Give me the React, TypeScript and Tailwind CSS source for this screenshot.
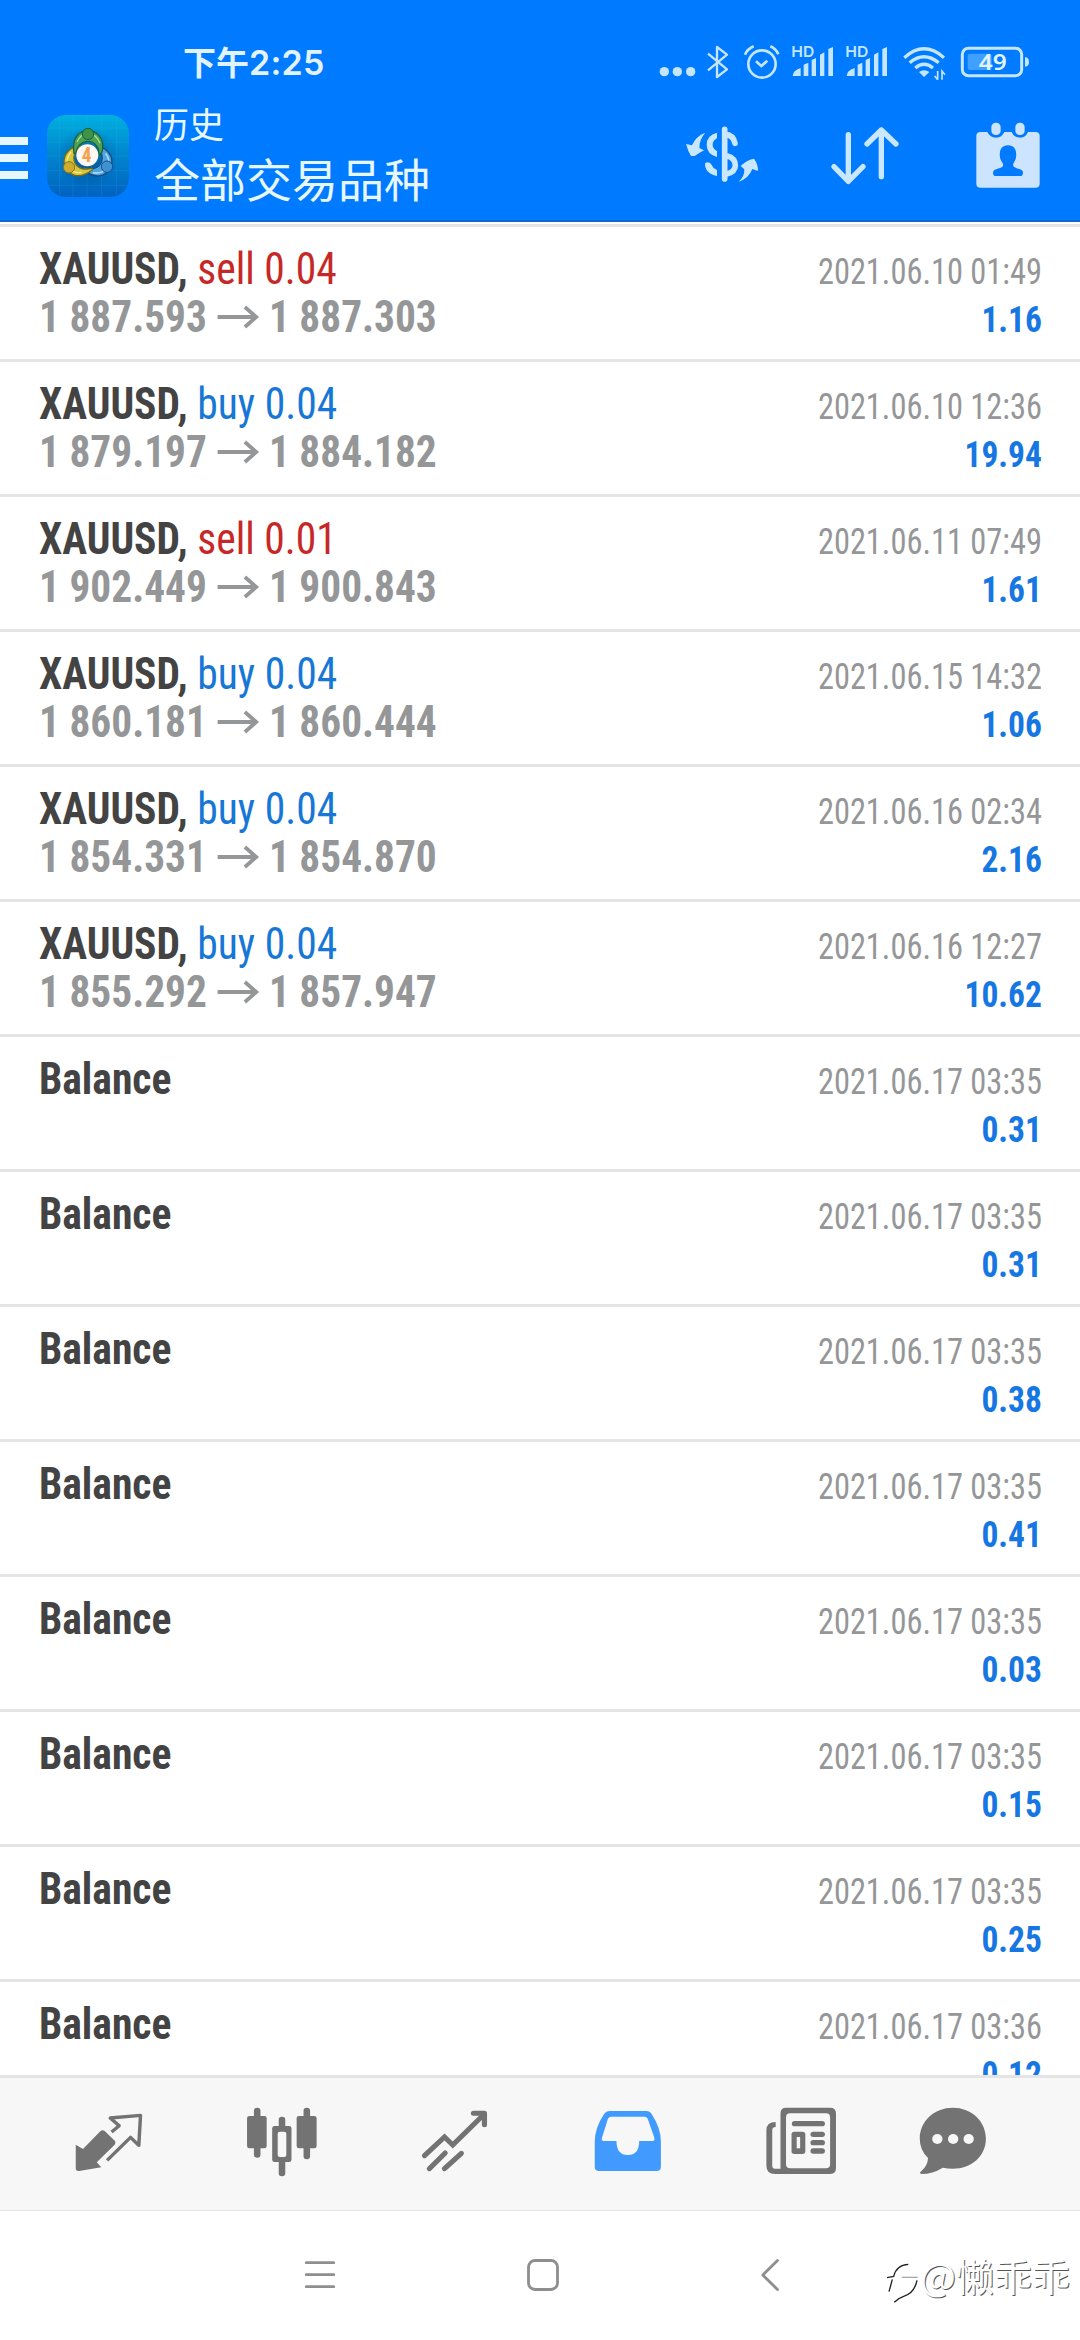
import React from 'react';

type Deal = {
  side?: 'buy' | 'sell';
  volume?: string;
  open?: string;
  close?: string;
  time: string;
  profit: string;
};

const deals: Deal[] = [
  { side: 'sell', volume: '0.04', open: '1 887.593', close: '1 887.303', time: '2021.06.10 01:49', profit: '1.16' },
  { side: 'buy', volume: '0.04', open: '1 879.197', close: '1 884.182', time: '2021.06.10 12:36', profit: '19.94' },
  { side: 'sell', volume: '0.01', open: '1 902.449', close: '1 900.843', time: '2021.06.11 07:49', profit: '1.61' },
  { side: 'buy', volume: '0.04', open: '1 860.181', close: '1 860.444', time: '2021.06.15 14:32', profit: '1.06' },
  { side: 'buy', volume: '0.04', open: '1 854.331', close: '1 854.870', time: '2021.06.16 02:34', profit: '2.16' },
  { side: 'buy', volume: '0.04', open: '1 855.292', close: '1 857.947', time: '2021.06.16 12:27', profit: '10.62' },
  { time: '2021.06.17 03:35', profit: '0.31' },
  { time: '2021.06.17 03:35', profit: '0.31' },
  { time: '2021.06.17 03:35', profit: '0.38' },
  { time: '2021.06.17 03:35', profit: '0.41' },
  { time: '2021.06.17 03:35', profit: '0.03' },
  { time: '2021.06.17 03:35', profit: '0.15' },
  { time: '2021.06.17 03:35', profit: '0.25' },
  { time: '2021.06.17 03:36', profit: '0.12' },
];

function Signal() {
  return (
    <svg className="w-[54px] h-10" viewBox="438 36 162 120" fill="#c4e6ff">
      <text x="454" y="82" fontSize="45" fontWeight="600" fontFamily="Inter, sans-serif" textLength="69" lengthAdjust="spacingAndGlyphs">HD</text>
      <path d="M458 138 Q458 122 482 114 V138 Z M491 104 L505 98 V138 H491 Z M515 90 L528 84 V138 H515 Z M540 74 L553 67 V138 H540 Z M565 57 L579 51 V138 H565 Z" />
    </svg>
  );
}

function StatusBar() {
  return (
    <div className="flex h-[84px] pt-[42px]">
      <div className="-mt-0.5 w-[654px] pl-[183px] text-[33px] leading-[42px] font-bold text-[#e2f3ff] font-['Noto_Sans_CJK_SC',sans-serif]">
        下午<span className="text-[34px] tracking-[0.3px] font-semibold font-['Inter',sans-serif]">2:25</span>
      </div>
      <svg className="w-12 h-10" viewBox="42 36 144 120" fill="#c4e6ff">
        <circle cx="73" cy="125" r="14" />
        <circle cx="112" cy="125" r="14" />
        <circle cx="152" cy="125" r="14" />
      </svg>
      <svg className="w-[35px] h-10" viewBox="186 36 105 120" fill="none" stroke="#c4e6ff" strokeWidth="7">
        <path d="M204 71 L261 118 L231 141 V51 L261 74 L204 121" strokeLinejoin="round" />
      </svg>
      <svg className="w-[49px] h-10" viewBox="291 36 147 120" fill="none" stroke="#c4e6ff" strokeWidth="8">
        <circle cx="366" cy="102" r="41" />
        <path d="M348 94 L364 108 L382 92" />
        <path d="M315 74 Q322 57 341 49 M391 49 Q408 56 415 73" />
      </svg>
      <Signal />
      <Signal />
      <svg className="w-[61px] h-10" viewBox="762 36 183 120" fill="none" stroke="#c4e6ff" strokeWidth="10">
        <path d="M793 83 Q852 30 912 83 M809 98 Q852 62 896 98 M826 114 Q852 92 879 114" />
        <path d="M837 126 Q852 116 868 126 L852 141 Z" fill="#c4e6ff" stroke="none" />
        <path d="M893 123 V149 M884 138 L893 149 M906 149 V123 L915 134" strokeWidth="5" />
      </svg>
      <svg className="w-20 h-10" viewBox="945 36 240 120">
        <rect x="967" y="55" width="178" height="82" rx="18" fill="none" stroke="#c4e6ff" strokeWidth="9" />
        <rect x="983" y="71" width="72" height="49" rx="6" fill="#3fa0ff" />
        <path d="M1155 82 Q1167 82 1167 96 Q1167 110 1155 110 Z" fill="#c4e6ff" />
        <text x="1016" y="121" fontSize="66" fontWeight="600" fontFamily="Noto Sans, sans-serif" fill="#e2f5ff" textLength="84" lengthAdjust="spacingAndGlyphs">49</text>
      </svg>
    </div>
  );
}

// one arm of the three-figure emblem, pointing up
const ARM = 'M103 130 C95 82 120 62 145 62 C172 62 192 84 189 116 Q188 130 178 136 C180 112 165 94 145 94 C127 94 112 108 108 130 Z';

function Logo() {
  return (
    <svg className="ml-[19px] mt-[31px] size-[82px]" viewBox="22 15 246 246">
      <defs>
        <linearGradient id="tile" x1="0" y1="0" x2="0" y2="1">
          <stop offset="0" stopColor="#00b0e0" />
          <stop offset="0.45" stopColor="#0088cf" />
          <stop offset="1" stopColor="#0062c0" />
        </linearGradient>
        <radialGradient id="glow">
          <stop offset="0" stopColor="#003c6e" stopOpacity="0.55" />
          <stop offset="1" stopColor="#003c6e" stopOpacity="0" />
        </radialGradient>
      </defs>
      <rect x="22" y="15" width="246" height="246" rx="56" fill="url(#tile)" />
      <path d="M60 20 V256 M100 15 V261 M142 15 V261 M186 15 V261 M230 20 V256 M22 54 H268 M22 96 H268 M22 138 H268 M22 182 H268 M22 226 H268" stroke="#4fc0ee" strokeOpacity="0.22" strokeWidth="2" />
      <circle cx="145" cy="145" r="95" fill="url(#glow)" />
      <g strokeWidth="4" strokeLinejoin="round">
        <g transform="rotate(120 145 138)">
          <path d={ARM} fill="#52a4de" stroke="#14508a" />
          <path d="M112 96 Q122 72 145 70 Q170 72 181 100" fill="none" stroke="#b4def5" />
        </g>
        <g transform="rotate(240 145 138)">
          <path d={ARM} fill="#d8c63c" stroke="#6f6a1c" />
          <path d="M112 96 Q122 72 145 70 Q170 72 181 100" fill="none" stroke="#f5ec93" />
        </g>
        <path d={ARM} fill="#4da252" stroke="#1b6340" />
        <path d="M112 96 Q122 72 145 70 Q170 72 181 100" fill="none" stroke="#a8dca0" />
      </g>
      <circle cx="145" cy="72" r="17" fill="#3f9347" stroke="#1b6340" strokeWidth="3" />
      <circle cx="88" cy="172" r="17" fill="#cfac2e" stroke="#7d7417" strokeWidth="3" />
      <circle cx="202" cy="170" r="17" fill="#3f92d2" stroke="#14508a" strokeWidth="3" />
      <circle cx="143" cy="136" r="33" fill="#fdf8f4" />
      <text x="126" y="157" fontSize="58" fontWeight="700" fontFamily="Roboto, sans-serif" fill="#f5a04a">4</text>
    </svg>
  );
}

function Header() {
  return (
    <header className="h-[222px] bg-[#007aff] border-b-2 border-[#1069cf]">
      <StatusBar />
      <div className="flex">
        <div className="mt-[53px] flex w-7 flex-col gap-[9px]">
          <div className="h-2 bg-[#e6f7ff]" />
          <div className="h-2 bg-[#e6f7ff]" />
          <div className="h-2 bg-[#e6f7ff]" />
        </div>
        <Logo />
        <div className="ml-[25px] mt-[17px] flex-1 text-[#e6f7ff] font-['Noto_Sans_CJK_SC',sans-serif]">
          <div className="text-[35px] leading-[44px]">历史</div>
          <div className="text-[46px] leading-[64px]">全部交易品种</div>
        </div>
        <div className="mr-9 mt-[35px] flex gap-[71px]">
          <svg className="size-[72px]" viewBox="78 57 216 216" fill="#c9e7ff">
            <path d="M136 98 Q118 118 118 144 L132 151 Q116 160 104 168 H93 Q84 154 78 132 L96 136 Q108 108 136 98 Z" />
            <path d="M236 245 Q254 230 253 208 L242 198 Q262 178 282 176 Q294 192 294 213 L277 207 Q266 236 236 245 Z" />
            <path d="M194 88 V237 M194 103 Q220 104 225 130 M200 167 Q226 174 226 196 Q226 216 200 222" fill="none" stroke="#c9e7ff" strokeWidth="17" strokeLinecap="round" />
            <path d="M171 98 V115 Q158 122 158 134 Q158 146 171 153 V171 Q140 162 140 134 Q140 106 171 98 Z M171 228 V210 Q158 204 153 192 Q146 182 135 190 Q134 220 171 228 Z" />
          </svg>
          <svg className="size-[72px]" viewBox="507 57 216 216" fill="none" stroke="#c9e7ff" strokeWidth="16" strokeLinecap="round" strokeLinejoin="round">
            <path d="M565 104 V244 M522 200 L565 244 L609 200" />
            <path d="M664 230 V90 M621 132 L664 90 L708 132" />
          </svg>
          <svg className="size-[72px]" viewBox="936 57 216 216" fill="#cde4ff">
            <path d="M962 96 H982 Q990 113 1008 113 Q1026 113 1033 96 H1055 Q1062 113 1080 113 Q1098 113 1104 96 H1126 Q1139 96 1139 108 V251 Q1139 263 1126 263 H962 Q949 263 949 251 V108 Q949 96 962 96 Z" />
            <rect x="994" y="68" width="28" height="37" rx="13" />
            <rect x="1066" y="68" width="28" height="37" rx="13" />
            <path d="M1044 136 C1064 136 1071 152 1068 172 C1066 186 1058 188 1060 198 C1066 208 1089 204 1089 218 Q1089 228 1080 228 H1008 Q999 228 999 218 C999 204 1024 208 1029 198 C1031 188 1022 186 1020 172 C1017 152 1024 136 1044 136 Z" fill="#007aff" />
          </svg>
        </div>
      </div>
    </header>
  );
}

function DealRow({ deal }: { deal: Deal }) {
  return (
    <div className="flex h-[135px] shrink-0 justify-between border-b-[3px] border-[#e4e4e4] pl-[39px] pr-[38px] pt-[18px] whitespace-nowrap">
      <div className="text-[44px] leading-[48px] font-bold">
        <div className="origin-left scale-x-[0.944] text-[#434343]">
          {deal.side ? (
            <>
              XAUUSD,{' '}
              <span className={deal.side === 'buy' ? 'font-normal text-[#1777d6]' : 'font-normal text-[#c62828]'}>
                {deal.side} {deal.volume}
              </span>
            </>
          ) : (
            'Balance'
          )}
        </div>
        {deal.open && (
          <div className="flex origin-left scale-x-[0.94] items-center text-[#959698]">
            {deal.open}
            <svg className="mx-2.5 w-[46px] h-6" viewBox="0 0 46 24" fill="none" stroke="#959698" strokeWidth="4">
              <path d="M1 12 H43 M30 2 L42 12 L30 22" />
            </svg>
            {deal.close}
          </div>
        )}
      </div>
      <div className="pt-[3px] text-right text-[36px] leading-[48px]">
        <div className="origin-right scale-x-90 text-[#959698]">{deal.time}</div>
        <div className="origin-right scale-x-[0.93] font-bold text-[#1777e2]">{deal.profit}</div>
      </div>
    </div>
  );
}

function TabBar() {
  return (
    <nav className="flex h-[136px] shrink-0 border-t-[3px] border-b border-[#e4e4e4] bg-[#f7f7f7] pl-[22px] pt-7 text-[#737373]">
      <div className="flex w-[173px] justify-center">
        <svg className="size-[72px]" viewBox="211 138 209 216" preserveAspectRatio="none" fill="currentColor">
          <path d="M219 254 L240 267 L291 213 Q297 208 303 213 L333 243 Q336 248 332 254 L280 307 L293 322 L229 333 Q219 334 219 325 Z" />
          <path d="M323 216 L345 197 L319 174 L407 166 L402 256 L378 232 L310 301" fill="none" stroke="currentColor" strokeWidth="10" strokeLinejoin="round" />
        </svg>
      </div>
      <div className="flex w-[173px] justify-center">
        <svg className="size-[72px]" viewBox="712 138 209 216" preserveAspectRatio="none" fill="currentColor">
          <rect x="735" y="143" width="19" height="150" rx="9" />
          <rect x="715" y="168" width="57" height="97" rx="7" />
          <rect x="879" y="143" width="19" height="155" rx="9" />
          <rect x="859" y="168" width="58" height="97" rx="7" />
          <rect x="807" y="170" width="19" height="50" rx="9" />
          <rect x="807" y="290" width="19" height="59" rx="9" />
          <rect x="788" y="198" width="56" height="108" rx="7" />
          <rect x="804" y="215" width="25" height="76" rx="6" fill="#f7f7f7" />
        </svg>
      </div>
      <div className="flex w-[173px] justify-center">
        <svg className="size-[72px]" viewBox="1215 138 209 216" preserveAspectRatio="none" fill="none" stroke="currentColor" strokeWidth="15" strokeLinecap="round">
          <path d="M1231 287 L1289 231 L1313 255 L1404 163" />
          <path d="M1373 160 H1405 V194" strokeLinejoin="round" />
          <path d="M1245 326 L1291 279 M1289 326 L1338 280" />
        </svg>
      </div>
      <div className="flex w-[173px] justify-center">
        <svg className="size-[72px]" viewBox="150 138 209 216" preserveAspectRatio="none" fill="#419bff">
          <path d="M200 153 H308 Q318 153 323 162 Q350 204 350 245 V320 Q350 333 337 333 H171 Q158 333 158 320 V245 Q158 204 185 162 Q191 153 200 153 Z" />
          <path d="M206 170 H303 Q309 170 312 177 L331 233 Q333 243 324 243 H287 Q287 285 254 285 Q221 285 221 243 H186 Q176 243 179 233 L196 177 Q199 170 206 170 Z" fill="#f7f7f7" />
        </svg>
      </div>
      <div className="flex w-[173px] justify-center">
        <svg className="size-[72px]" viewBox="653 138 209 216" preserveAspectRatio="none" fill="currentColor">
          <path d="M714 143 H842 Q859 143 859 160 V325 Q859 342 842 342 H682 Q657 342 657 317 V211 Q657 186 684 186 V201 Q674 201 674 211 V317 Q674 326 682 326 H698 V160 Q698 143 714 143 Z" />
          <rect x="714" y="160" width="128" height="165" rx="12" fill="#f7f7f7" />
          <rect x="731" y="183" width="96" height="16" rx="8" />
          <rect x="730" y="215" width="40" height="67" rx="8" />
          <rect x="745" y="231" width="10" height="34" fill="#f7f7f7" />
          <rect x="785" y="215" width="42" height="16" rx="8" />
          <rect x="785" y="240" width="42" height="16" rx="8" />
          <rect x="785" y="265" width="42" height="16" rx="8" />
        </svg>
      </div>
      <div className="flex w-[132px] justify-center">
        <svg className="size-[72px]" viewBox="1095 138 209 216" preserveAspectRatio="none" fill="currentColor">
          <path d="M1199 143 C1254 143 1295 184 1295 236 C1295 287 1254 326 1199 326 Q1184 326 1170 323 Q1140 342 1108 342 Q1100 340 1107 334 Q1126 318 1127 294 Q1103 270 1103 236 C1103 184 1144 143 1199 143 Z" />
          <circle cx="1154" cy="237" r="15" fill="#f7f7f7" />
          <circle cx="1200" cy="237" r="15" fill="#f7f7f7" />
          <circle cx="1245" cy="237" r="15" fill="#f7f7f7" />
        </svg>
      </div>
    </nav>
  );
}

function SystemNav() {
  return (
    <div className="flex h-[129px] shrink-0 bg-white pt-12">
      <svg className="ml-[305px] w-[30px] h-8" viewBox="0 0 30 32" stroke="#8e8e8e" strokeWidth="2.7" strokeLinecap="round">
        <path d="M1.3 3.7 H28.7 M1.3 15.7 H28.7 M1.3 27.7 H28.7" />
      </svg>
      <svg className="ml-[192px] size-8" viewBox="0 0 32 32" fill="none" stroke="#8e8e8e" strokeWidth="2.8">
        <rect x="1.5" y="1.5" width="29" height="29" rx="6.5" />
      </svg>
      <svg className="ml-[202px] w-[18px] h-8" viewBox="0 0 18 32" fill="none" stroke="#8e8e8e" strokeWidth="2.8" strokeLinecap="round" strokeLinejoin="round">
        <path d="M16.5 1.5 L1.8 16 L16.5 30.5" />
      </svg>
      <svg className="ml-[107px] mt-1 w-[34px] h-10 shrink-0" viewBox="45 54 102 120" fill="none" stroke="#222" strokeWidth="4">
        <path d="M54 140 L64 103 M48 98 L68 94 Q76 60 112 58 M138 106 Q130 145 98 154 Q84 158 70 172" />
        <path d="M92 97 H140" stroke="#aaa" />
      </svg>
      <div className="-mt-[7px] whitespace-nowrap text-[38px] leading-[46px] text-white [text-shadow:1px_1px_0_#555] font-['Noto_Sans_CJK_SC',sans-serif]">@懒乖乖</div>
    </div>
  );
}

export default function App() {
  return (
    <div className="flex h-[2340px] w-[1080px] flex-col overflow-hidden bg-white font-['Roboto_Condensed','Roboto',sans-serif] [font-stretch:75%]">
      <Header />
      <main className="mt-0.5 flex h-[1851px] shrink-0 flex-col overflow-hidden border-t-[3px] border-[#e4e4e4]">
        {deals.map((deal, i) => (
          <DealRow key={i} deal={deal} />
        ))}
      </main>
      <TabBar />
      <SystemNav />
    </div>
  );
}
